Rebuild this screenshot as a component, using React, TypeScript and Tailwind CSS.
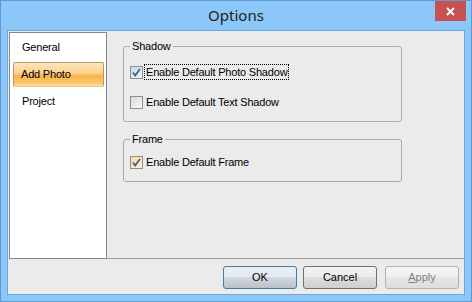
import React from "react";

const font = { fontFamily: '"Liberation Sans", Arial, sans-serif' };

const Check = ({ checked, tint }: { checked: boolean; tint: "blue" | "orange" | "none" }) => {
  const bg =
    tint === "blue"
      ? "bg-[linear-gradient(135deg,#cbd6e6,#eef2f8)]"
      : tint === "orange"
      ? "bg-[linear-gradient(135deg,#f6d9a0,#fdf1d8)]"
      : "bg-[linear-gradient(135deg,#dcdcdc,#f7f7f7)]";
  return (
    <span className={`flex h-[13px] w-[13px] shrink-0 items-center justify-center border border-[#8e8f8f] ${bg}`}>
      {checked && (
        <svg width="11" height="11" viewBox="0 0 11 11">
          <path d="M2 5.5 L4.2 8.5 L9 2" fill="none" stroke="#3f5f94" strokeWidth="1.7" />
        </svg>
      )}
    </span>
  );
};

const Button = ({ children, variant }: { children: React.ReactNode; variant: "default" | "normal" | "disabled" }) => {
  const cls =
    variant === "default"
      ? "border-[#3c7fb1] bg-[linear-gradient(#eaf0f5,#e3e8ee_50%,#d3d9e0_50%,#b9c0c8)] text-black"
      : variant === "normal"
      ? "border-[#707070] bg-[linear-gradient(#f2f2f2,#ebebeb_50%,#dddddd_50%,#cfcfcf)] text-black"
      : "border-[#adb2b5] bg-[linear-gradient(#f4f4f4,#efefef_50%,#e6e6e6_50%,#dedede)] text-[#838383]";
  return (
    <div
      className={`flex h-[23px] w-[74px] items-center justify-center rounded-[3px] border text-[11px] ${cls}`}
      style={font}
    >
      {children}
    </div>
  );
};

export default function App() {
  return (
    <div className="flex h-[302px] w-[472px] flex-col border border-[#5d9ad3] bg-[#8bc7f8]" style={font}>
      {/* Title bar */}
      <div className="relative flex h-[29px] shrink-0 items-center justify-center">
        <span className="pb-[1px] text-[15px] text-[#222]" style={{ fontFamily: '"Noto Sans", "Open Sans", sans-serif' }}>
          Options
        </span>
        <div className="absolute right-[5px] top-0 flex h-[20px] w-[31px] items-center justify-center bg-[#c75050]">
          <svg width="9" height="9" viewBox="0 0 9 9">
            <path d="M1 1 L8 8 M8 1 L1 8" stroke="#fff" strokeWidth="2" />
          </svg>
        </div>
      </div>

      <div className="flex flex-1 flex-col px-[6px] pb-[6px]">
        <div className="flex flex-1 flex-col border border-[#6ea7da] bg-[#ebebeb]">
          {/* Top area */}
          <div className="flex h-[228px] items-start">
            {/* List */}
            <div className="ml-[1px] mt-[1px] flex h-[227px] w-[98px] shrink-0 flex-col gap-[2px] border border-[#828790] bg-white pl-[3px] pr-[2px] pt-[2px] text-[11px] tracking-[-0.2px] text-black">
              <div className="flex h-[25px] items-center pl-[9px]">General</div>
              <div className="flex h-[25px] items-center rounded-[2px] border border-[#b39a6a] border-b-[#e8c888] bg-[linear-gradient(#fde6bb,#fcd18a_45%,#f9b44c_55%,#fbc467_85%,#fde2a6)] pl-[7px]">
                Add Photo
              </div>
              <div className="flex h-[25px] items-center pl-[9px]">Project</div>
            </div>

            {/* Right side */}
            <div className="flex h-full flex-1 flex-col border-b border-[#a0a0a0] pl-[16px] pt-[9px] text-[11px] tracking-[-0.2px] text-black">
              <fieldset className="w-[279px] rounded-[3px] border border-[#a7abb0] px-[6px] pb-[11px]">
                <legend className="px-[2px] leading-[13px]">Shadow</legend>
                <div className="mt-[11px] flex h-[16px] items-center">
                  <Check checked tint="blue" />
                  <span className="ml-[1px] border border-dotted border-black px-[1px] leading-[14px]">
                    Enable Default Photo Shadow
                  </span>
                </div>
                <div className="mt-[14px] flex h-[16px] items-center">
                  <Check checked={false} tint="none" />
                  <span className="ml-[1px] border border-transparent px-[1px] leading-[14px]">
                    Enable Default Text Shadow
                  </span>
                </div>
              </fieldset>

              <fieldset className="mt-[11px] w-[279px] rounded-[3px] border border-[#a7abb0] px-[6px] pb-[11px]">
                <legend className="px-[2px] leading-[13px]">Frame</legend>
                <div className="mt-[8px] flex h-[16px] items-center">
                  <Check checked tint="orange" />
                  <span className="ml-[1px] border border-transparent px-[1px] leading-[14px]">
                    Enable Default Frame
                  </span>
                </div>
              </fieldset>
            </div>
          </div>

          {/* Buttons */}
          <div className="flex flex-1 items-start justify-end pr-[5px] pt-[7px]">
            <Button variant="default">OK</Button>
            <div className="ml-[6px]">
              <Button variant="normal">Cancel</Button>
            </div>
            <div className="ml-[8px]">
              <Button variant="disabled">
                <span>
                  <span className="underline">A</span>pply
                </span>
              </Button>
            </div>
          </div>
        </div>
      </div>
    </div>
  );
}
